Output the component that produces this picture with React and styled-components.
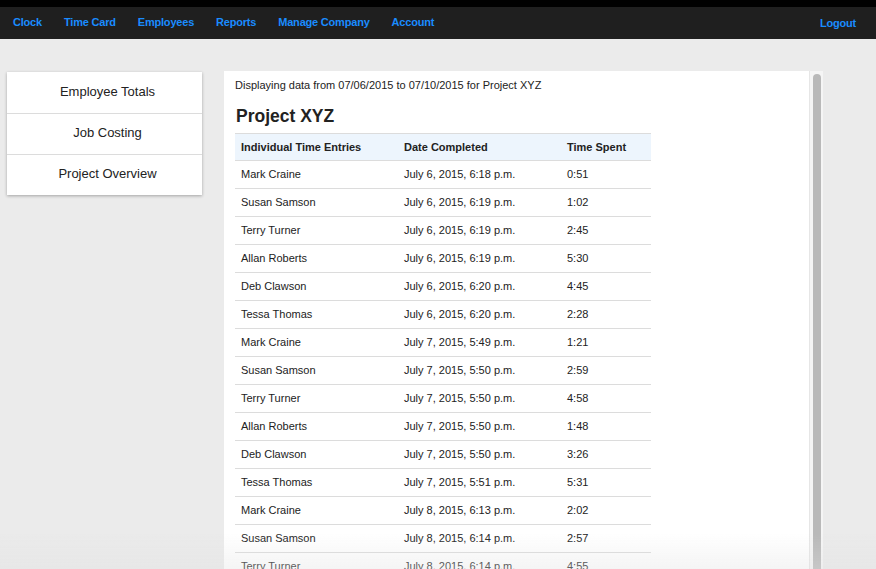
import styled, { createGlobalStyle } from "styled-components";

const GlobalStyle = createGlobalStyle`
  html, body {
    margin: 0;
    padding: 0;
    height: 100%;
    overflow: hidden;
    background: #ebebeb;
    font-family: "Liberation Sans", Arial, Helvetica, sans-serif;
    color: #222;
  }
`;

const navItems = ["Clock", "Time Card", "Employees", "Reports", "Manage Company", "Account"];

const entries = [
  ["Mark Craine", "July 6, 2015, 6:18 p.m.", "0:51"],
  ["Susan Samson", "July 6, 2015, 6:19 p.m.", "1:02"],
  ["Terry Turner", "July 6, 2015, 6:19 p.m.", "2:45"],
  ["Allan Roberts", "July 6, 2015, 6:19 p.m.", "5:30"],
  ["Deb Clawson", "July 6, 2015, 6:20 p.m.", "4:45"],
  ["Tessa Thomas", "July 6, 2015, 6:20 p.m.", "2:28"],
  ["Mark Craine", "July 7, 2015, 5:49 p.m.", "1:21"],
  ["Susan Samson", "July 7, 2015, 5:50 p.m.", "2:59"],
  ["Terry Turner", "July 7, 2015, 5:50 p.m.", "4:58"],
  ["Allan Roberts", "July 7, 2015, 5:50 p.m.", "1:48"],
  ["Deb Clawson", "July 7, 2015, 5:50 p.m.", "3:26"],
  ["Tessa Thomas", "July 7, 2015, 5:51 p.m.", "5:31"],
  ["Mark Craine", "July 8, 2015, 6:13 p.m.", "2:02"],
  ["Susan Samson", "July 8, 2015, 6:14 p.m.", "2:57"],
  ["Terry Turner", "July 8, 2015, 6:14 p.m.", "4:55"],
];

const Page = styled.div`
  display: flex;
  flex-direction: column;
  height: 100vh;
`;

const TopBar = styled.header`
  display: flex;
  align-items: center;
  height: 32px;
  border-top: 7px solid #000;
  background: #1f1f1f;
  padding: 0 2px;
  flex-shrink: 0;
`;

const NavLink = styled.a`
  color: #1a8cff;
  font-size: 11px;
  font-weight: 700;
  text-decoration: none;
  padding: 0 11px;
  margin-top: ${({ $push }) => ($push ? "0" : "-2px")};
  margin-left: ${({ $push }) => ($push ? "auto" : "0")};
  margin-right: ${({ $push }) => ($push ? "7px" : "0")};
  letter-spacing: -0.2px;
`;

const Body = styled.div`
  display: flex;
  align-items: flex-start;
  gap: 22px;
  padding: 32px 0 0 7px;
  flex: 1;
  min-height: 0;
`;

const Sidebar = styled.nav`
  width: 195px;
  margin-top: 1px;
  background: #fff;
  box-shadow: 0 1px 3px rgba(0, 0, 0, 0.3);
  display: flex;
  flex-direction: column;
`;

const SideItem = styled.div`
  box-sizing: border-box;
  height: 41px;
  display: flex;
  align-items: center;
  justify-content: center;
  padding: 0 0 3px 6px;
  font-size: 13px;
  color: #222;
  border-top: ${({ $first }) => ($first ? "none" : "1px solid #dcdcdc")};
`;

const Panel = styled.main`
  align-self: stretch;
  width: 599px;
  background: #fff;
  display: flex;
  overflow: hidden;
`;

const Content = styled.div`
  flex: 1;
  padding: 8px 0 0 11px;
  overflow: hidden;
`;

const ScrollTrack = styled.div`
  width: 14px;
  flex-shrink: 0;
  box-sizing: border-box;
  background: #f5f5f5;
  border-left: 1px solid #e6e6e6;
  padding: 3px 2px 0 3px;
`;

const ScrollThumb = styled.div`
  width: 8px;
  height: 100%;
  background: #b9b9b9;
  border-radius: 4px 4px 0 0;
`;

const Caption = styled.p`
  margin: 0;
  font-size: 11px;
  color: #222;
`;

const Title = styled.h2`
  margin: 15px 0 6px 1px;
  font-size: 17.5px;
  font-weight: 700;
  color: #222;
`;

const Table = styled.table`
  width: 416px;
  border-collapse: collapse;
  font-size: 11px;
  color: #222;
`;

const HeadCell = styled.th`
  text-align: left;
  font-weight: 700;
  background: #edf5fd;
  border-top: 1px solid #dcdcdc;
  border-bottom: 1px solid #dcdcdc;
  height: 25px;
  padding: 0 6px 1px;
  width: ${({ $w }) => $w};
`;

const Cell = styled.td`
  height: 26px;
  padding: 0 6px 1px;
  border-bottom: 1px solid #dcdcdc;
`;

const BottomFade = styled.div`
  position: fixed;
  left: 0;
  right: 0;
  bottom: 0;
  height: 36px;
  pointer-events: none;
  background: linear-gradient(rgba(235, 235, 235, 0), rgba(225, 225, 225, 0.35));
`;

export default function App() {
  return (
    <Page>
      <GlobalStyle />
      <TopBar>
        {navItems.map((item) => (
          <NavLink key={item} href="#">
            {item}
          </NavLink>
        ))}
        <NavLink $push href="#">
          Logout
        </NavLink>
      </TopBar>
      <Body>
        <Sidebar>
          <SideItem $first>Employee Totals</SideItem>
          <SideItem>Job Costing</SideItem>
          <SideItem>Project Overview</SideItem>
        </Sidebar>
        <Panel>
          <Content>
            <Caption>Displaying data from 07/06/2015 to 07/10/2015 for Project XYZ</Caption>
            <Title>Project XYZ</Title>
            <Table>
              <thead>
                <tr>
                  <HeadCell $w="151px">Individual Time Entries</HeadCell>
                  <HeadCell $w="151px">Date Completed</HeadCell>
                  <HeadCell>Time Spent</HeadCell>
                </tr>
              </thead>
              <tbody>
                {entries.map(([name, date, time], i) => (
                  <tr key={i}>
                    <Cell>{name}</Cell>
                    <Cell>{date}</Cell>
                    <Cell>{time}</Cell>
                  </tr>
                ))}
              </tbody>
            </Table>
          </Content>
          <ScrollTrack>
            <ScrollThumb />
          </ScrollTrack>
        </Panel>
      </Body>
      <BottomFade />
    </Page>
  );
}
